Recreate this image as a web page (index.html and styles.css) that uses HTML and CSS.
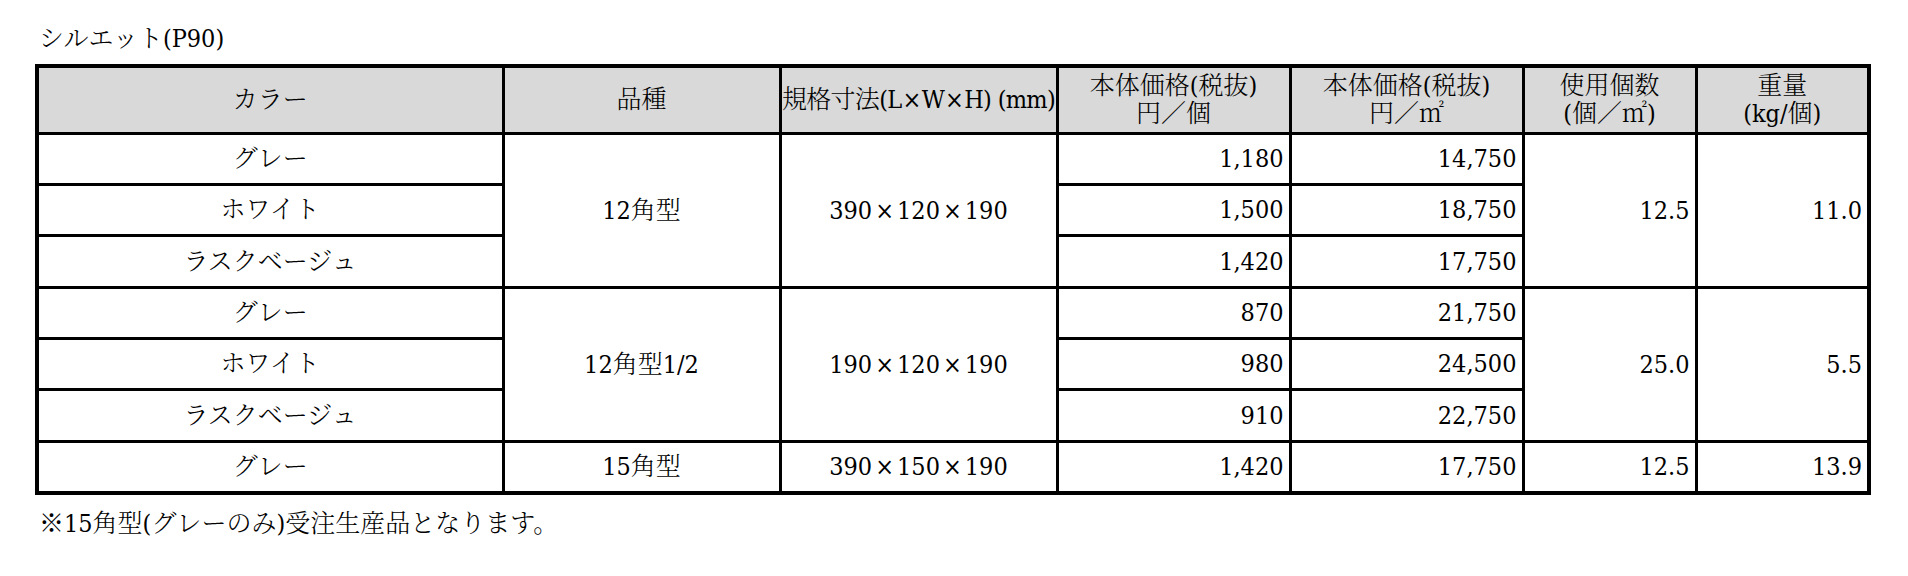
FILE: index.html
```html
<!DOCTYPE html>
<html>
<head>
<meta charset="utf-8">
<title>シルエット(P90)</title>
<link rel="stylesheet" href="styles.css">
</head>
<body>
<div class="page">
  <div class="title">シルエット(P90)</div>
  <table class="spec">
    <colgroup>
      <col class="c-color"><col class="c-kind"><col class="c-size"><col class="c-p1"><col class="c-p2"><col class="c-use"><col class="c-wt">
    </colgroup>
    <thead>
      <tr>
        <th>カラー</th>
        <th>品種</th>
        <th class="tight">規格寸法(L<span class="xs">×</span>W<span class="xs">×</span>H) (mm)</th>
        <th>本体価格(税抜)<br>円／個</th>
        <th>本体価格(税抜)<br>円／㎡</th>
        <th>使用個数<br>(個／㎡)</th>
        <th>重量<br>(kg/個)</th>
      </tr>
    </thead>
    <tbody>
      <tr>
        <td class="c">グレー</td>
        <td class="c" rowspan="3">12角型</td>
        <td class="c" rowspan="3">390<span class="x">×</span>120<span class="x">×</span>190</td>
        <td class="r">1,180</td>
        <td class="r">14,750</td>
        <td class="r" rowspan="3">12.5</td>
        <td class="r" rowspan="3">11.0</td>
      </tr>
      <tr>
        <td class="c">ホワイト</td>
        <td class="r">1,500</td>
        <td class="r">18,750</td>
      </tr>
      <tr class="tall">
        <td class="c">ラスクベージュ</td>
        <td class="r">1,420</td>
        <td class="r">17,750</td>
      </tr>
      <tr>
        <td class="c">グレー</td>
        <td class="c" rowspan="3">12角型1/2</td>
        <td class="c" rowspan="3">190<span class="x">×</span>120<span class="x">×</span>190</td>
        <td class="r">870</td>
        <td class="r">21,750</td>
        <td class="r" rowspan="3">25.0</td>
        <td class="r" rowspan="3">5.5</td>
      </tr>
      <tr>
        <td class="c">ホワイト</td>
        <td class="r">980</td>
        <td class="r">24,500</td>
      </tr>
      <tr class="tall">
        <td class="c">ラスクベージュ</td>
        <td class="r">910</td>
        <td class="r">22,750</td>
      </tr>
      <tr>
        <td class="c">グレー</td>
        <td class="c">15角型</td>
        <td class="c">390<span class="x">×</span>150<span class="x">×</span>190</td>
        <td class="r">1,420</td>
        <td class="r">17,750</td>
        <td class="r">12.5</td>
        <td class="r">13.9</td>
      </tr>
    </tbody>
  </table>
  <div class="note">※15角型(グレーのみ)受注生産品となります。</div>
</div>
</body>
</html>
```

FILE: styles.css
```css
html, body {
  margin: 0;
  padding: 0;
  background: #ffffff;
}

body {
  font-family: "DejaVu Serif", "Noto Serif CJK JP", "Noto Sans CJK JP", serif;
  font-stretch: condensed;
  font-weight: 300;
  font-size: 25px;
  color: #000000;
}

.page {
  padding: 24px 0 0 35px;
}

.title {
  line-height: 30px;
  height: 30px;
  padding-left: 4px;
  margin-bottom: 10px;
}

.spec {
  border-collapse: collapse;
  table-layout: fixed;
  width: 1836px;
  border: 4px solid #000;
}

.c-color { width: 466px; }
.c-kind { width: 277px; }
.c-size { width: 277px; }
.c-p1 { width: 233px; }
.c-p2 { width: 233px; }
.c-use { width: 173px; }
.c-wt { width: 173px; }

.spec th,
.spec td {
  border: 3px solid #000;
  padding: 0 5px;
  font-weight: 300;
  vertical-align: middle;
  white-space: nowrap;
}

.spec th {
  background: #d9d9d9;
  text-align: center;
  line-height: 28px;
  height: 64px;
}

.spec th.tight {
  padding: 0;
  font-size: 25px;
  letter-spacing: -0.7px;
}

.spec tbody tr {
  height: 51px;
}

.spec tbody tr.tall {
  height: 52px;
}

.spec td {
  line-height: 30px;
}

.spec td.c {
  text-align: center;
}

.spec td.r {
  text-align: right;
}

.x {
  margin: 0 3px;
}

.xs {
  margin: 0 1px;
}

.note {
  margin-top: 14px;
  line-height: 30px;
  padding-left: 4px;
}
```
